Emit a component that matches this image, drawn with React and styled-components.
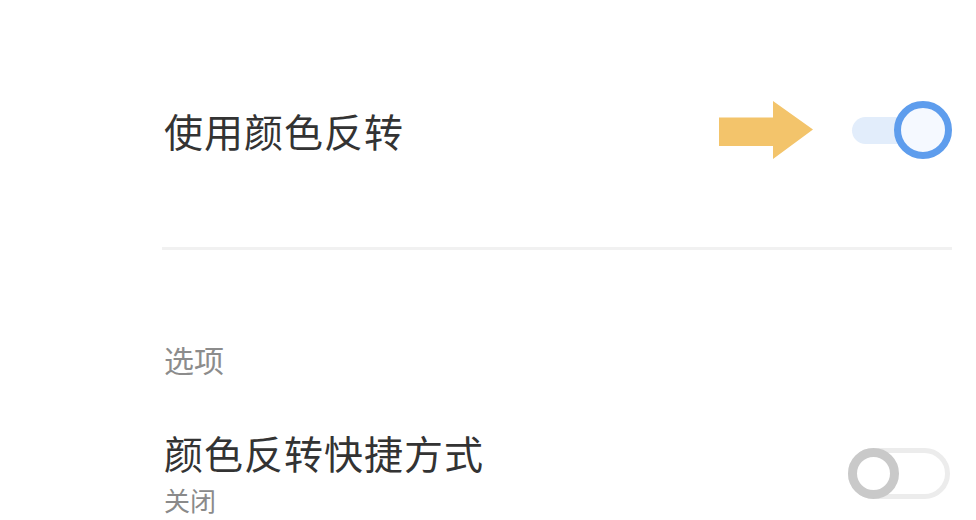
import React from 'react';
import styled, { createGlobalStyle } from 'styled-components';

const GlobalStyle = createGlobalStyle`
  html, body {
    margin: 0;
    padding: 0;
    background: #ffffff;
  }
  body {
    font-family: "Noto Sans CJK SC", "Noto Sans", sans-serif;
  }
`;

const Page = styled.div`
  width: 976px;
  height: 520px;
  overflow: hidden;
  box-sizing: border-box;
  padding: 0 24px 0 164px;
  background: #ffffff;
`;

const Row = styled.div`
  display: flex;
  align-items: ${p => p.align || 'center'};
  justify-content: space-between;
  padding-top: ${p => p.top}px;
`;

const TextBlock = styled.div`
  display: flex;
  flex-direction: column;
`;

const Title = styled.div`
  font-size: 39px;
  line-height: 60px;
  color: #333333;
  letter-spacing: 1px;
`;

const Sub = styled.div`
  font-size: 26px;
  line-height: 30px;
  color: #8a8a8a;
  margin-top: 3px;
`;

const SectionLabel = styled.div`
  font-size: 30px;
  line-height: 44px;
  color: #8c8c8c;
  padding-top: 87px;
`;

const Divider = styled.div`
  height: 3px;
  background: #f1f1f1;
  margin: 87px 0 0 -2px;
`;

const Controls = styled.div`
  display: flex;
  align-items: center;
  gap: 38px;
`;

const SwitchBox = styled.div`
  position: relative;
  flex-shrink: 0;
  width: ${p => (p.on ? 100 : 102)}px;
  height: ${p => (p.on ? 58 : 51)}px;
  margin: ${p => (p.on ? '0 0 0 0' : '26px 2px 0 0')};
`;

const Track = styled.div`
  position: absolute;
  box-sizing: border-box;
  border-radius: 999px;
  ${p =>
    p.on
      ? `left: 0; right: 12px; top: 16px; height: 27px; background: #e2edfb;`
      : `left: 0; right: 0; top: 0; bottom: 0; background: #ffffff; border: 5px solid #ececec;`}
`;

const Knob = styled.div`
  position: absolute;
  box-sizing: border-box;
  border-radius: 50%;
  top: 0;
  ${p =>
    p.on
      ? `right: 0; width: 58px; height: 58px; border: 7px solid #5e9ded; background: #f5f9ff;`
      : `left: 0; width: 51px; height: 51px; border: 9px solid #c9c9c9; background: #ffffff;`}
`;

const Switch = ({ on }) => (
  <SwitchBox on={on}>
    <Track on={on} />
    <Knob on={on} />
  </SwitchBox>
);

const Arrow = () => (
  <svg width="95" height="59" viewBox="0 0 95 59">
    <polygon
      points="0,16.5 54,16.5 54,0 94,28.5 54,58 54,45 0,45"
      fill="#f3c46b"
    />
  </svg>
);

export default function App() {
  return (
    <>
      <GlobalStyle />
      <Page>
        <Row top={100}>
          <Title>使用颜色反转</Title>
          <Controls>
            <Arrow />
            <Switch on />
          </Controls>
        </Row>
        <Divider />
        <SectionLabel>选项</SectionLabel>
        <Row top={41} align="flex-start">
          <TextBlock>
            <Title>颜色反转快捷方式</Title>
            <Sub>关闭</Sub>
          </TextBlock>
          <Switch />
        </Row>
      </Page>
    </>
  );
}
